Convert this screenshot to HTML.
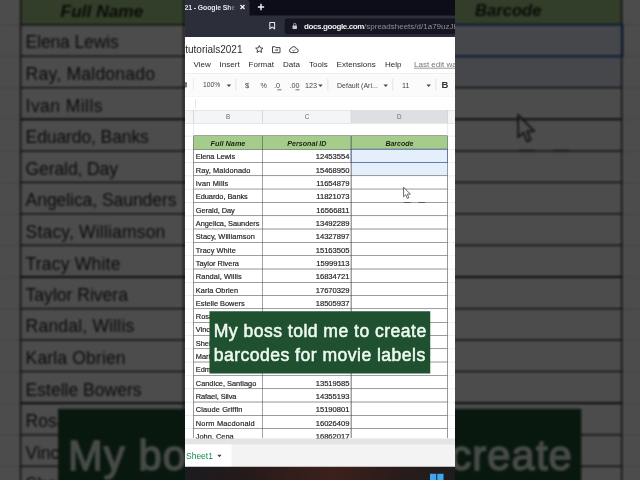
<!DOCTYPE html>
<html lang="en"><head><meta charset="utf-8"><title>My boss told me to create barcodes for movie labels</title>
<style>
html,body{margin:0;padding:0;background:#4c4c4c;}
body{width:640px;height:480px;overflow:hidden;position:relative;font-family:"Liberation Sans",sans-serif;}
#stage{position:absolute;left:0;top:0;width:640px;height:480px;overflow:hidden;background:#4c4c4c;}
#bgwrap{position:absolute;left:-40px;top:-40px;width:720px;height:560px;filter:blur(1px) brightness(0.3);background:#fff;overflow:hidden;}
#bg{position:absolute;left:40px;top:-288.9px;width:1080px;height:1920px;transform:scale(0.5926);transform-origin:0 0;}
#fg{position:absolute;left:185px;top:0;width:270px;height:480px;overflow:hidden;filter:blur(0.35px);}
#fgs{position:absolute;left:0;top:0;width:1080px;height:1920px;transform:scale(0.25);transform-origin:0 0;}

.v{position:absolute;left:0;top:0;width:1080px;height:1920px;background:#fff;overflow:hidden;color:#333;}
.v div,.v svg{position:absolute;}
.v span,.v b{position:static;}
.ico{overflow:visible}
.tabstrip{left:0;top:0;width:1080px;height:68px;background:#0d0d1a;}
.tab{left:0;top:0;width:258px;height:68px;background:#2c2e39;border-radius:0 10px 0 0;}
.tabtxt{left:-2px;top:12.8px;font-size:27.6px;font-weight:bold;color:#e4e4ea;white-space:nowrap;letter-spacing:-0.4px}
.tabfade{left:174px;top:0;width:30px;height:60px;background:linear-gradient(90deg,rgba(44,46,57,0),#2c2e39);}
.navbar{left:0;top:62px;width:1080px;height:86px;background:#2c2e39;}
.urlbox{left:398.8px;top:74.4px;width:688px;height:62.4px;background:#15161f;border-radius:10px;}
.url{left:476px;top:86.4px;font-size:32px;white-space:nowrap;color:#8d909b;}
.url b{color:#f0f0f4;font-weight:bold;letter-spacing:-1.52px}
.app{left:0;top:148px;width:1080px;height:1772px;background:#fff;}
.title{left:0.8px;top:176px;font-size:40px;color:#2b2b2b;white-space:nowrap;}
.menu{top:239.6px;font-size:32px;color:#2a2a2a;white-space:nowrap;}
.menu.last{color:#777;text-decoration:underline;}
.toolbar{left:0;top:292px;width:1080px;height:90px;background:#fbfbfc;border-top:2.4px solid #e3e3e3;border-bottom:2.4px solid #dcdcdc;}
.tbt{top:324.8px;white-space:nowrap;}
.vsep{top:314px;width:2.8px;height:48px;background:#dcdcdc;}
.arr{top:358px;width:16px;height:3.2px;background:#444;}
.fbar{left:0;top:386px;width:1080px;height:54px;background:#fff;}
.fsep{left:40px;top:396px;width:2.8px;height:36px;background:#ddd;}
.colhdr{left:0;top:440px;width:1080px;height:53.6px;background:#f4f5f6;border-top:2.4px solid #d5d5d5;border-bottom:2.4px solid #cfcfcf;box-sizing:border-box;}
.colsel{left:665.2px;top:440px;width:384.8px;height:53.6px;background:#dddfe2;}
.chline{top:440px;width:3.2px;height:53.6px;background:#cfcfcf;}
.chl{top:452.8px;width:80px;text-align:center;font-size:25.2px;color:#6a6a6a;}
.faintv{top:493.6px;width:2.8px;height:1260px;background:#e4e4e4;}
.fainth{left:0;width:1080px;height:2.8px;background:#e8e8e8;}
.hdrrow{left:34px;top:544px;width:1016px;height:53.6px;background:#a6cc8b;}
.hdrt{top:558.4px;text-align:center;font-size:29.2px;font-weight:bold;font-style:italic;color:#1c2417;white-space:nowrap;}
.selfill{left:665.2px;width:384.8px;background:#e5eefb;}
.nm{left:43.2px;font-size:29.6px;line-height:55.2px;color:#222;white-space:nowrap;}
.idn{left:310px;width:348px;text-align:right;font-size:30.4px;line-height:55.2px;color:#222;white-space:nowrap;}
.hl{left:34px;width:1016px;height:2px;background:#4a4a4a;}
#bg .hl{height:2.2px;background:#161616;}
.vl{top:544px;width:2.48px;height:1208px;background:#444;}
#bg .vl{width:2.2px;background:#161616;}
#bg .selbox{border-width:3.4px;}
.dash{top:808px;width:28px;height:3.2px;background:#444;}
.pf{left:0;top:328px;width:8px;height:22px;background:#777;border-radius:0 4px 4px 0;}
#fg .nm,#fg .idn{-webkit-text-stroke:0.72px #222;}
.selbox{left:663.2px;width:388.4px;border:2.6px solid #2c5cb8;box-sizing:border-box;}
.scrollb{left:0;top:1753.6px;width:1080px;height:26px;background:#e4e4e4;}
.sheetbar{left:0;top:1778px;width:1080px;height:90px;background:#f3f3f4;}
.sheettab{left:0;top:1778px;width:186px;height:90px;background:#fff;}
.sheetname{left:4px;top:1803.2px;font-size:34px;color:#188a55;white-space:nowrap;}
.taskbar{left:0;top:1867.2px;width:1080px;height:56px;background:linear-gradient(90deg,#1c1b1f 0%,#241a1a 20%,#3d201b 55%,#2a1c1b 78%,#1d1c1e 100%);}
.win{top:1895.2px;width:25.2px;height:28px;background:#3ea6ee;}
.cap{left:98px;top:1244.8px;width:883.2px;height:249.6px;background:#1f5131;color:#eefaf0;-webkit-text-stroke:2.2px #eefaf0;font-size:70.4px;line-height:94px;padding:31.8px 0 0 16.8px;box-sizing:border-box;white-space:nowrap;letter-spacing:1.84px}
</style></head>
<body>
<div id="stage">
<div id="bgwrap"><div id="bg"><div class="v">
<div class="tabstrip"></div>
<div class="tab"></div><div class="tabtxt">21 - Google She</div>
<div class="tabfade"></div>
<svg class="ico" style="left:220.4px;top:18.4px" width="20" height="20" viewBox="0 0 10 10"><path d="M1 1L9 9M9 1L1 9" stroke="#f4f4f8" stroke-width="2.6" fill="none"/></svg>
<svg class="ico" style="left:290.4px;top:14.4px" width="28" height="28" viewBox="0 0 10 10"><path d="M5 0.5V9.5M0.5 5H9.5" stroke="#f2f2f6" stroke-width="2" fill="none"/></svg>
<div class="navbar"></div>
<div class="urlbox"></div>
<svg class="ico" style="left:336px;top:87.2px" width="25.6" height="32" viewBox="0 0 8 10"><path d="M1 1H7V9L4 6.6L1 9Z" stroke="#e6e6ec" stroke-width="1.3" fill="none" stroke-linejoin="round"/></svg>
<svg class="ico" style="left:428.8px;top:91.2px" width="20" height="25.6" viewBox="0 0 10 13"><rect x="0.5" y="5.5" width="9" height="7" rx="1" fill="#c9cad2"/><path d="M2.6 6V3.6a2.4 2.4 0 0 1 4.8 0V6" stroke="#c9cad2" stroke-width="1.5" fill="none"/></svg>
<div class="url"><b>docs.google.com</b><span>/spreadsheets/d/1a79uzJl</span></div>
<div class="app"></div>
<div class="title">tutorials2021</div>
<svg class="ico" style="left:278.4px;top:177.2px" width="38.4" height="38.4" viewBox="0 0 24 24"><path d="M12 3.2l2.7 5.9 6.4.7-4.8 4.3 1.4 6.3L12 17.2l-5.7 3.2 1.4-6.3L2.9 9.8l6.4-.7z" stroke="#383838" stroke-width="2.3" fill="none" stroke-linejoin="round"/></svg>
<svg class="ico" style="left:347.2px;top:182.4px" width="36" height="32" viewBox="0 0 24 21"><path d="M2 3h7l2 2.5h11V19H2z" stroke="#383838" stroke-width="2.5" fill="none" stroke-linejoin="round"/><path d="M8 12h8M13 9l3 3-3 3" stroke="#383838" stroke-width="2" fill="none"/></svg>
<svg class="ico" style="left:415.2px;top:182.4px" width="40" height="32" viewBox="0 0 26 20"><path d="M7 18a5.5 5.5 0 0 1-.6-10.9A7 7 0 0 1 19.8 8 5 5 0 0 1 19.5 18z" stroke="#383838" stroke-width="2.5" fill="none" stroke-linejoin="round"/><path d="M9.5 12l2.5 2.5 5-5" stroke="#383838" stroke-width="2" fill="none"/></svg>
<div class="menu" style="left:34.4px">View</div>
<div class="menu" style="left:138.4px">Insert</div>
<div class="menu" style="left:254.4px">Format</div>
<div class="menu" style="left:392px">Data</div>
<div class="menu" style="left:496px">Tools</div>
<div class="menu" style="left:606.4px">Extensions</div>
<div class="menu" style="left:800px">Help</div>
<div class="menu last" style="left:916px">Last edit was seconds ago</div>
<div class="toolbar"></div>
<div class="tbt" style="left:72px;font-size:26.8px;color:#444">100%</div>
<div class="tbt" style="left:240px;font-size:30.4px;color:#444">$</div>
<div class="tbt" style="left:302px;font-size:28.8px;color:#444">%</div>
<div class="tbt" style="left:356px;font-size:28.8px;color:#444">.0</div>
<div class="tbt" style="left:418px;font-size:28.8px;color:#444">.00</div>
<div class="tbt" style="left:480px;font-size:28.8px;color:#444">123</div>
<div class="tbt" style="left:608px;font-size:28px;color:#444">Default (Ari...</div>
<div class="tbt" style="left:868px;font-size:28.8px;color:#444">11</div>
<div class="tbt" style="left:1026.4px;font-size:38px;color:#333;font-weight:bold;top:317.6px">B</div>
<svg class="ico" style="left:167.2px;top:338.4px" width="17.6" height="10.4" viewBox="0 0 10 6"><path d="M0 0H10L5 6Z" fill="#444"/></svg>
<svg class="ico" style="left:532.8px;top:338.4px" width="17.6" height="10.4" viewBox="0 0 10 6"><path d="M0 0H10L5 6Z" fill="#444"/></svg>
<svg class="ico" style="left:793.6px;top:338.4px" width="17.6" height="10.4" viewBox="0 0 10 6"><path d="M0 0H10L5 6Z" fill="#444"/></svg>
<svg class="ico" style="left:965.6px;top:338.4px" width="17.6" height="10.4" viewBox="0 0 10 6"><path d="M0 0H10L5 6Z" fill="#444"/></svg>
<div class="vsep" style="left:33.6px"></div>
<div class="vsep" style="left:202.4px"></div>
<div class="vsep" style="left:570.4px"></div>
<div class="vsep" style="left:830px"></div>
<div class="vsep" style="left:1002px"></div>
<div class="arr" style="left:370px"></div><div class="arr" style="left:442px"></div>
<div class="fbar"></div><div class="fsep"></div>
<div class="colhdr"></div><div class="colsel"></div>
<div class="chline" style="left:32px"></div>
<div class="chline" style="left:308px"></div>
<div class="chline" style="left:663.2px"></div>
<div class="chline" style="left:1048px"></div>
<div class="chl" style="left:132px">B</div>
<div class="chl" style="left:448px">C</div>
<div class="chl" style="left:817.2px">D</div>
<div class="faintv" style="left:32px"></div><div class="faintv" style="left:1048px"></div>
<div class="fainth" style="top:492px"></div>
<div class="fainth" style="top:596px"></div>
<div class="fainth" style="top:649.2px"></div>
<div class="fainth" style="top:702.44px"></div>
<div class="fainth" style="top:755.64px"></div>
<div class="fainth" style="top:808.84px"></div>
<div class="fainth" style="top:862.04px"></div>
<div class="fainth" style="top:915.28px"></div>
<div class="fainth" style="top:968.48px"></div>
<div class="fainth" style="top:1021.68px"></div>
<div class="fainth" style="top:1074.92px"></div>
<div class="fainth" style="top:1128.12px"></div>
<div class="fainth" style="top:1181.32px"></div>
<div class="fainth" style="top:1234.56px"></div>
<div class="fainth" style="top:1287.76px"></div>
<div class="fainth" style="top:1340.96px"></div>
<div class="fainth" style="top:1394.16px"></div>
<div class="fainth" style="top:1447.4px"></div>
<div class="fainth" style="top:1500.6px"></div>
<div class="fainth" style="top:1553.8px"></div>
<div class="fainth" style="top:1607.04px"></div>
<div class="fainth" style="top:1660.24px"></div>
<div class="fainth" style="top:1713.44px"></div>
<div class="fainth" style="top:542.8px"></div>
<div class="hdrrow"></div>
<div class="hdrt" style="left:34px;width:276px;font-size:29.2px">Full Name</div>
<div class="hdrt" style="left:310px;width:355.2px;font-size:28.4px">Personal ID</div>
<div class="hdrt" style="left:665.2px;width:384.8px;font-size:28px">Barcode</div>
<div class="selfill" style="top:597.4px;height:106.424px"></div>
<div class="nm" style="top:599.4px;letter-spacing:-0.24px">Elena Lewis</div><div class="idn" style="top:599.4px">12453554</div>
<div class="nm" style="top:652.6px;letter-spacing:0.4px">Ray, Maldonado</div><div class="idn" style="top:652.6px">15468950</div>
<div class="nm" style="top:705.84px;letter-spacing:0.72px">Ivan Mills</div><div class="idn" style="top:705.84px">11654879</div>
<div class="nm" style="top:759.04px;letter-spacing:-0.2px">Eduardo, Banks</div><div class="idn" style="top:759.04px">11821073</div>
<div class="nm" style="top:812.24px;letter-spacing:-0.2px">Gerald, Day</div><div class="idn" style="top:812.24px">16566811</div>
<div class="nm" style="top:865.48px;letter-spacing:-0.12px">Angelica, Saunders</div><div class="idn" style="top:865.48px">13492289</div>
<div class="nm" style="top:918.68px;letter-spacing:0.28px">Stacy, Williamson</div><div class="idn" style="top:918.68px">14327897</div>
<div class="nm" style="top:971.88px;letter-spacing:0.32px">Tracy White</div><div class="idn" style="top:971.88px">15163505</div>
<div class="nm" style="top:1025.08px;letter-spacing:0px">Taylor Rivera</div><div class="idn" style="top:1025.08px">15999113</div>
<div class="nm" style="top:1078.32px;letter-spacing:0.32px">Randal, Willis</div><div class="idn" style="top:1078.32px">16834721</div>
<div class="nm" style="top:1131.52px;letter-spacing:0.24px">Karla Obrien</div><div class="idn" style="top:1131.52px">17670329</div>
<div class="nm" style="top:1184.72px;letter-spacing:0px">Estelle Bowers</div><div class="idn" style="top:1184.72px">18505937</div>
<div class="nm" style="top:1237.96px;letter-spacing:0px">Rosa Parks</div><div class="idn" style="top:1237.96px">19341545</div>
<div class="nm" style="top:1291.16px;letter-spacing:0px">Vincent, Vega</div><div class="idn" style="top:1291.16px">10177153</div>
<div class="nm" style="top:1344.36px;letter-spacing:0px">Shelly Long</div><div class="idn" style="top:1344.36px">11012761</div>
<div class="nm" style="top:1397.56px;letter-spacing:0px">Mario, Lopez</div><div class="idn" style="top:1397.56px">11848369</div>
<div class="nm" style="top:1450.8px;letter-spacing:0px">Edmund Hill</div><div class="idn" style="top:1450.8px">12683977</div>
<div class="nm" style="top:1504px;letter-spacing:0px">Candice, Santiago</div><div class="idn" style="top:1504px">13519585</div>
<div class="nm" style="top:1557.2px;letter-spacing:-0.32px">Rafael, Silva</div><div class="idn" style="top:1557.2px">14355193</div>
<div class="nm" style="top:1610.44px;letter-spacing:0.48px">Claude Griffin</div><div class="idn" style="top:1610.44px">15190801</div>
<div class="nm" style="top:1663.64px;letter-spacing:0.8px">Norm Macdonald</div><div class="idn" style="top:1663.64px">16026409</div>
<div class="nm" style="top:1716.84px;letter-spacing:0px">John, Cena</div><div class="idn" style="top:1716.84px">16862017</div>
<div class="hl" style="top:595.8px"></div>
<div class="hl" style="top:649px"></div>
<div class="hl" style="top:702.24px"></div>
<div class="hl" style="top:755.44px"></div>
<div class="hl" style="top:808.64px"></div>
<div class="hl" style="top:861.84px"></div>
<div class="hl" style="top:915.08px"></div>
<div class="hl" style="top:968.28px"></div>
<div class="hl" style="top:1021.48px"></div>
<div class="hl" style="top:1074.72px"></div>
<div class="hl" style="top:1127.92px"></div>
<div class="hl" style="top:1181.12px"></div>
<div class="hl" style="top:1234.36px"></div>
<div class="hl" style="top:1287.56px"></div>
<div class="hl" style="top:1340.76px"></div>
<div class="hl" style="top:1394px"></div>
<div class="hl" style="top:1447.2px"></div>
<div class="hl" style="top:1500.4px"></div>
<div class="hl" style="top:1553.6px"></div>
<div class="hl" style="top:1606.84px"></div>
<div class="hl" style="top:1660.04px"></div>
<div class="hl" style="top:1713.24px"></div>
<div class="hl" style="top:542px"></div>
<div class="vl" style="left:33.6px"></div>
<div class="vl" style="left:308.8px"></div>
<div class="vl" style="left:663.2px"></div>
<div class="vl" style="left:1048px"></div>
<div class="selbox" style="top:595px;height:56.812px"></div>
<div class="dash" style="left:874.8px"></div><div class="dash" style="left:933.2px"></div>
<div class="pf"></div>
<svg class="ico" style="left:870px;top:746px;opacity:.75" width="36" height="52" viewBox="0 0 12 19"><path d="M1 1V15L4.2 12L6.5 17.5L8.8 16.5L6.5 11.2H11Z" fill="#fff" stroke="#222" stroke-width="1.3" stroke-linejoin="round"/></svg>
<div class="scrollb"></div><div class="sheetbar"></div><div class="sheettab"></div>
<div class="sheetname">Sheet1</div>
<svg class="ico" style="left:128.8px;top:1819.2px" width="17.6" height="10.4" viewBox="0 0 10 6"><path d="M0 0H10L5 6Z" fill="#3c4043"/></svg>
<div class="taskbar"></div>
<div class="win" style="left:980px"></div><div class="win" style="left:1008.8px"></div>
<div class="cap">My boss told me to create<br>barcodes for movie labels</div>
</div></div></div>
<div id="fg"><div id="fgs"><div class="v">
<div class="tabstrip"></div>
<div class="tab"></div><div class="tabtxt">21 - Google She</div>
<div class="tabfade"></div>
<svg class="ico" style="left:220.4px;top:18.4px" width="20" height="20" viewBox="0 0 10 10"><path d="M1 1L9 9M9 1L1 9" stroke="#f4f4f8" stroke-width="2.6" fill="none"/></svg>
<svg class="ico" style="left:290.4px;top:14.4px" width="28" height="28" viewBox="0 0 10 10"><path d="M5 0.5V9.5M0.5 5H9.5" stroke="#f2f2f6" stroke-width="2" fill="none"/></svg>
<div class="navbar"></div>
<div class="urlbox"></div>
<svg class="ico" style="left:336px;top:87.2px" width="25.6" height="32" viewBox="0 0 8 10"><path d="M1 1H7V9L4 6.6L1 9Z" stroke="#e6e6ec" stroke-width="1.3" fill="none" stroke-linejoin="round"/></svg>
<svg class="ico" style="left:428.8px;top:91.2px" width="20" height="25.6" viewBox="0 0 10 13"><rect x="0.5" y="5.5" width="9" height="7" rx="1" fill="#c9cad2"/><path d="M2.6 6V3.6a2.4 2.4 0 0 1 4.8 0V6" stroke="#c9cad2" stroke-width="1.5" fill="none"/></svg>
<div class="url"><b>docs.google.com</b><span>/spreadsheets/d/1a79uzJl</span></div>
<div class="app"></div>
<div class="title">tutorials2021</div>
<svg class="ico" style="left:278.4px;top:177.2px" width="38.4" height="38.4" viewBox="0 0 24 24"><path d="M12 3.2l2.7 5.9 6.4.7-4.8 4.3 1.4 6.3L12 17.2l-5.7 3.2 1.4-6.3L2.9 9.8l6.4-.7z" stroke="#383838" stroke-width="2.3" fill="none" stroke-linejoin="round"/></svg>
<svg class="ico" style="left:347.2px;top:182.4px" width="36" height="32" viewBox="0 0 24 21"><path d="M2 3h7l2 2.5h11V19H2z" stroke="#383838" stroke-width="2.5" fill="none" stroke-linejoin="round"/><path d="M8 12h8M13 9l3 3-3 3" stroke="#383838" stroke-width="2" fill="none"/></svg>
<svg class="ico" style="left:415.2px;top:182.4px" width="40" height="32" viewBox="0 0 26 20"><path d="M7 18a5.5 5.5 0 0 1-.6-10.9A7 7 0 0 1 19.8 8 5 5 0 0 1 19.5 18z" stroke="#383838" stroke-width="2.5" fill="none" stroke-linejoin="round"/><path d="M9.5 12l2.5 2.5 5-5" stroke="#383838" stroke-width="2" fill="none"/></svg>
<div class="menu" style="left:34.4px">View</div>
<div class="menu" style="left:138.4px">Insert</div>
<div class="menu" style="left:254.4px">Format</div>
<div class="menu" style="left:392px">Data</div>
<div class="menu" style="left:496px">Tools</div>
<div class="menu" style="left:606.4px">Extensions</div>
<div class="menu" style="left:800px">Help</div>
<div class="menu last" style="left:916px">Last edit was seconds ago</div>
<div class="toolbar"></div>
<div class="tbt" style="left:72px;font-size:26.8px;color:#444">100%</div>
<div class="tbt" style="left:240px;font-size:30.4px;color:#444">$</div>
<div class="tbt" style="left:302px;font-size:28.8px;color:#444">%</div>
<div class="tbt" style="left:356px;font-size:28.8px;color:#444">.0</div>
<div class="tbt" style="left:418px;font-size:28.8px;color:#444">.00</div>
<div class="tbt" style="left:480px;font-size:28.8px;color:#444">123</div>
<div class="tbt" style="left:608px;font-size:28px;color:#444">Default (Ari...</div>
<div class="tbt" style="left:868px;font-size:28.8px;color:#444">11</div>
<div class="tbt" style="left:1026.4px;font-size:38px;color:#333;font-weight:bold;top:317.6px">B</div>
<svg class="ico" style="left:167.2px;top:338.4px" width="17.6" height="10.4" viewBox="0 0 10 6"><path d="M0 0H10L5 6Z" fill="#444"/></svg>
<svg class="ico" style="left:532.8px;top:338.4px" width="17.6" height="10.4" viewBox="0 0 10 6"><path d="M0 0H10L5 6Z" fill="#444"/></svg>
<svg class="ico" style="left:793.6px;top:338.4px" width="17.6" height="10.4" viewBox="0 0 10 6"><path d="M0 0H10L5 6Z" fill="#444"/></svg>
<svg class="ico" style="left:965.6px;top:338.4px" width="17.6" height="10.4" viewBox="0 0 10 6"><path d="M0 0H10L5 6Z" fill="#444"/></svg>
<div class="vsep" style="left:33.6px"></div>
<div class="vsep" style="left:202.4px"></div>
<div class="vsep" style="left:570.4px"></div>
<div class="vsep" style="left:830px"></div>
<div class="vsep" style="left:1002px"></div>
<div class="arr" style="left:370px"></div><div class="arr" style="left:442px"></div>
<div class="fbar"></div><div class="fsep"></div>
<div class="colhdr"></div><div class="colsel"></div>
<div class="chline" style="left:32px"></div>
<div class="chline" style="left:308px"></div>
<div class="chline" style="left:663.2px"></div>
<div class="chline" style="left:1048px"></div>
<div class="chl" style="left:132px">B</div>
<div class="chl" style="left:448px">C</div>
<div class="chl" style="left:817.2px">D</div>
<div class="faintv" style="left:32px"></div><div class="faintv" style="left:1048px"></div>
<div class="fainth" style="top:492px"></div>
<div class="fainth" style="top:596px"></div>
<div class="fainth" style="top:649.2px"></div>
<div class="fainth" style="top:702.44px"></div>
<div class="fainth" style="top:755.64px"></div>
<div class="fainth" style="top:808.84px"></div>
<div class="fainth" style="top:862.04px"></div>
<div class="fainth" style="top:915.28px"></div>
<div class="fainth" style="top:968.48px"></div>
<div class="fainth" style="top:1021.68px"></div>
<div class="fainth" style="top:1074.92px"></div>
<div class="fainth" style="top:1128.12px"></div>
<div class="fainth" style="top:1181.32px"></div>
<div class="fainth" style="top:1234.56px"></div>
<div class="fainth" style="top:1287.76px"></div>
<div class="fainth" style="top:1340.96px"></div>
<div class="fainth" style="top:1394.16px"></div>
<div class="fainth" style="top:1447.4px"></div>
<div class="fainth" style="top:1500.6px"></div>
<div class="fainth" style="top:1553.8px"></div>
<div class="fainth" style="top:1607.04px"></div>
<div class="fainth" style="top:1660.24px"></div>
<div class="fainth" style="top:1713.44px"></div>
<div class="fainth" style="top:542.8px"></div>
<div class="hdrrow"></div>
<div class="hdrt" style="left:34px;width:276px;font-size:29.2px">Full Name</div>
<div class="hdrt" style="left:310px;width:355.2px;font-size:28.4px">Personal ID</div>
<div class="hdrt" style="left:665.2px;width:384.8px;font-size:28px">Barcode</div>
<div class="selfill" style="top:597.4px;height:106.424px"></div>
<div class="nm" style="top:599.4px;letter-spacing:-0.24px">Elena Lewis</div><div class="idn" style="top:599.4px">12453554</div>
<div class="nm" style="top:652.6px;letter-spacing:0.4px">Ray, Maldonado</div><div class="idn" style="top:652.6px">15468950</div>
<div class="nm" style="top:705.84px;letter-spacing:0.72px">Ivan Mills</div><div class="idn" style="top:705.84px">11654879</div>
<div class="nm" style="top:759.04px;letter-spacing:-0.2px">Eduardo, Banks</div><div class="idn" style="top:759.04px">11821073</div>
<div class="nm" style="top:812.24px;letter-spacing:-0.2px">Gerald, Day</div><div class="idn" style="top:812.24px">16566811</div>
<div class="nm" style="top:865.48px;letter-spacing:-0.12px">Angelica, Saunders</div><div class="idn" style="top:865.48px">13492289</div>
<div class="nm" style="top:918.68px;letter-spacing:0.28px">Stacy, Williamson</div><div class="idn" style="top:918.68px">14327897</div>
<div class="nm" style="top:971.88px;letter-spacing:0.32px">Tracy White</div><div class="idn" style="top:971.88px">15163505</div>
<div class="nm" style="top:1025.08px;letter-spacing:0px">Taylor Rivera</div><div class="idn" style="top:1025.08px">15999113</div>
<div class="nm" style="top:1078.32px;letter-spacing:0.32px">Randal, Willis</div><div class="idn" style="top:1078.32px">16834721</div>
<div class="nm" style="top:1131.52px;letter-spacing:0.24px">Karla Obrien</div><div class="idn" style="top:1131.52px">17670329</div>
<div class="nm" style="top:1184.72px;letter-spacing:0px">Estelle Bowers</div><div class="idn" style="top:1184.72px">18505937</div>
<div class="nm" style="top:1237.96px;letter-spacing:0px">Rosa Parks</div><div class="idn" style="top:1237.96px">19341545</div>
<div class="nm" style="top:1291.16px;letter-spacing:0px">Vincent, Vega</div><div class="idn" style="top:1291.16px">10177153</div>
<div class="nm" style="top:1344.36px;letter-spacing:0px">Shelly Long</div><div class="idn" style="top:1344.36px">11012761</div>
<div class="nm" style="top:1397.56px;letter-spacing:0px">Mario, Lopez</div><div class="idn" style="top:1397.56px">11848369</div>
<div class="nm" style="top:1450.8px;letter-spacing:0px">Edmund Hill</div><div class="idn" style="top:1450.8px">12683977</div>
<div class="nm" style="top:1504px;letter-spacing:0px">Candice, Santiago</div><div class="idn" style="top:1504px">13519585</div>
<div class="nm" style="top:1557.2px;letter-spacing:-0.32px">Rafael, Silva</div><div class="idn" style="top:1557.2px">14355193</div>
<div class="nm" style="top:1610.44px;letter-spacing:0.48px">Claude Griffin</div><div class="idn" style="top:1610.44px">15190801</div>
<div class="nm" style="top:1663.64px;letter-spacing:0.8px">Norm Macdonald</div><div class="idn" style="top:1663.64px">16026409</div>
<div class="nm" style="top:1716.84px;letter-spacing:0px">John, Cena</div><div class="idn" style="top:1716.84px">16862017</div>
<div class="hl" style="top:595.8px"></div>
<div class="hl" style="top:649px"></div>
<div class="hl" style="top:702.24px"></div>
<div class="hl" style="top:755.44px"></div>
<div class="hl" style="top:808.64px"></div>
<div class="hl" style="top:861.84px"></div>
<div class="hl" style="top:915.08px"></div>
<div class="hl" style="top:968.28px"></div>
<div class="hl" style="top:1021.48px"></div>
<div class="hl" style="top:1074.72px"></div>
<div class="hl" style="top:1127.92px"></div>
<div class="hl" style="top:1181.12px"></div>
<div class="hl" style="top:1234.36px"></div>
<div class="hl" style="top:1287.56px"></div>
<div class="hl" style="top:1340.76px"></div>
<div class="hl" style="top:1394px"></div>
<div class="hl" style="top:1447.2px"></div>
<div class="hl" style="top:1500.4px"></div>
<div class="hl" style="top:1553.6px"></div>
<div class="hl" style="top:1606.84px"></div>
<div class="hl" style="top:1660.04px"></div>
<div class="hl" style="top:1713.24px"></div>
<div class="hl" style="top:542px"></div>
<div class="vl" style="left:33.6px"></div>
<div class="vl" style="left:308.8px"></div>
<div class="vl" style="left:663.2px"></div>
<div class="vl" style="left:1048px"></div>
<div class="selbox" style="top:595px;height:56.812px"></div>
<div class="dash" style="left:874.8px"></div><div class="dash" style="left:933.2px"></div>
<div class="pf"></div>
<svg class="ico" style="left:870px;top:746px;opacity:.75" width="36" height="52" viewBox="0 0 12 19"><path d="M1 1V15L4.2 12L6.5 17.5L8.8 16.5L6.5 11.2H11Z" fill="#fff" stroke="#222" stroke-width="1.3" stroke-linejoin="round"/></svg>
<div class="scrollb"></div><div class="sheetbar"></div><div class="sheettab"></div>
<div class="sheetname">Sheet1</div>
<svg class="ico" style="left:128.8px;top:1819.2px" width="17.6" height="10.4" viewBox="0 0 10 6"><path d="M0 0H10L5 6Z" fill="#3c4043"/></svg>
<div class="taskbar"></div>
<div class="win" style="left:980px"></div><div class="win" style="left:1008.8px"></div>
<div class="cap">My boss told me to create<br>barcodes for movie labels</div>
</div></div></div>
</div>
</body></html>
